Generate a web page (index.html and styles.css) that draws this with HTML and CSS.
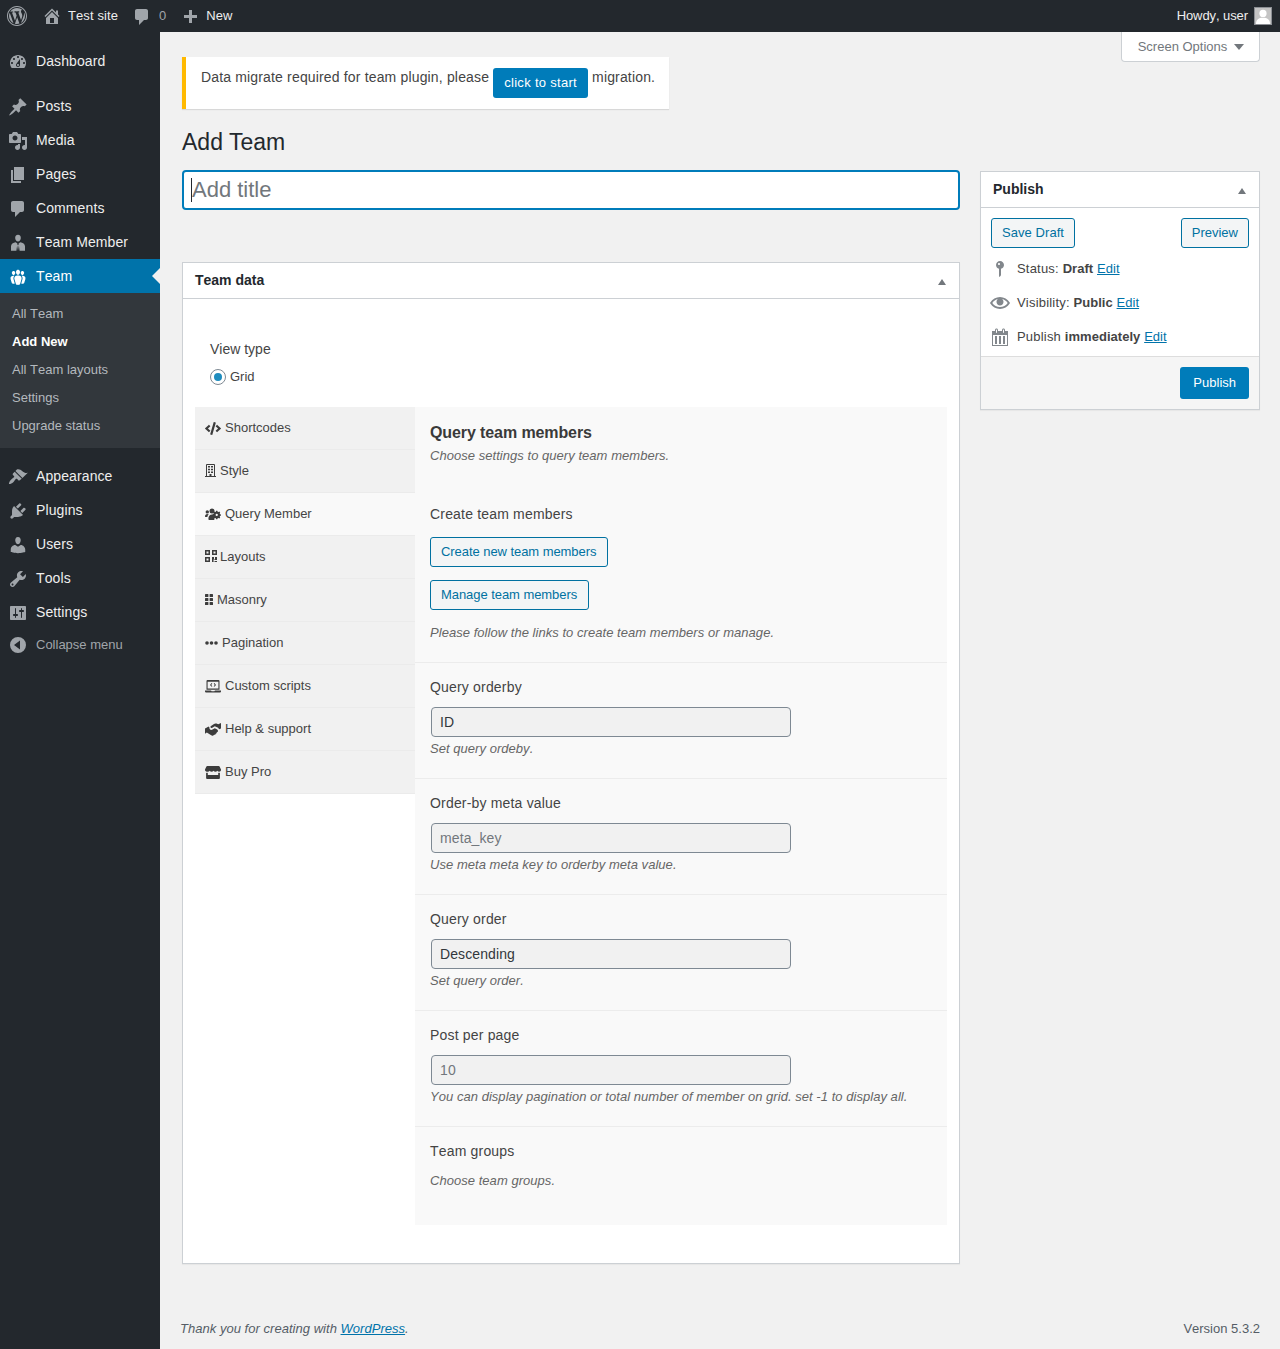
FILE: index.html
```html
<!DOCTYPE html>
<html lang="en">

<head>
    <meta charset="UTF-8">
    <meta name="viewport" content="width=device-width, initial-scale=1.0">
    <title>Add Team</title>
    <link rel="stylesheet" href="styles.css">
</head>

<body>
    <header class="adminbar">
        <svg class="bar-icon logo" viewBox="0 0 20 20"><path d="M20 10c0-5.52-4.48-10-10-10S0 4.48 0 10s4.48 10 10 10 10-4.48 10-10zM10 1.01c4.96 0 8.99 4.03 8.99 8.99s-4.03 8.99-8.99 8.99S1.01 14.96 1.01 10 5.04 1.01 10 1.01zM8.01 14.82L4.96 6.61c.49-.03 1.05-.08 1.05-.08.43-.05.38-1.01-.06-.99 0 0-1.29.1-2.13.1-.15 0-.33 0-.52-.01 1.44-2.17 3.9-3.6 6.7-3.6 2.09 0 3.99.79 5.41 2.09-.6-.08-1.45.35-1.45 1.42 0 .66.38 1.22.79 1.88.31.54.5 1.22.5 2.21 0 1.34-1.27 4.48-1.27 4.48l-2.71-7.5c.48-.03.75-.16.75-.16.43-.05.38-1.1-.05-1.08 0 0-1.3.11-2.14.11-.78 0-2.11-.11-2.11-.11-.43-.02-.48 1.06-.05 1.08l.84.08 1.12 3.04zm6.02 2.15L16.64 10s.67-1.69.39-3.81c.63 1.14.94 2.42.94 3.81 0 2.96-1.56 5.58-3.94 6.97zM2.68 6.77L6.5 17.25c-2.67-1.3-4.47-4.08-4.47-7.25 0-1.16.2-2.23.65-3.23zm7.45 4.53l2.29 6.25c-.75.27-1.57.42-2.42.42-.72 0-1.41-.11-2.06-.3z"/></svg>
        <svg class="bar-icon home" viewBox="0 0 20 20"><path d="M16 8.5l1.53 1.53-1.06 1.06L10 4.62l-6.47 6.47-1.06-1.06L10 2.5l4 4v-2h2v4zm-6-2.46l6 5.99V18H4v-5.97zM12 17v-5H8v5h4z"/></svg>
        <span class="bar-site">Test site</span>
        <svg class="bar-icon comment" viewBox="0 0 20 20"><path d="M5 2h9c1.1 0 2 .9 2 2v7c0 1.1-.9 2-2 2h-2l-5 5v-5H5c-1.1 0-2-.9-2-2V4c0-1.1.9-2 2-2z"/></svg>
        <span class="bar-count">0</span>
        <svg class="bar-icon plus" viewBox="0 0 20 20"><path d="M17 7v3h-5v5H9v-5H4V7h5V2h3v5h5z"/></svg>
        <span class="bar-new">New</span>
        <span class="bar-howdy">Howdy, user</span>
        <span class="avatar"><svg viewBox="0 0 16 16"><circle cx="8" cy="5.4" r="3.6"/><path d="M1 16c0-4.5 2.8-6.2 7-6.2s7 1.7 7 6.2z"/></svg></span>
    </header>

    <div class="layout">
        <nav class="sidemenu">
            <a class="menu-item first"><svg viewBox="0 0 20 20"><path d="M3.76 16h12.48c1.1-1.37 1.76-3.11 1.76-5 0-4.42-3.58-8-8-8s-8 3.58-8 8c0 1.89.66 3.63 1.76 5zM10 4c.55 0 1 .45 1 1s-.45 1-1 1-1-.45-1-1 .45-1 1-1zM6 6c.55 0 1 .45 1 1s-.45 1-1 1-1-.45-1-1 .45-1 1-1zm8 0c.55 0 1 .45 1 1s-.45 1-1 1-1-.45-1-1 .45-1 1-1zm-5.37 5.55L12 7v6c0 1.1-.9 2-2 2s-2-.9-2-2c0-.57.24-1.08.63-1.45zM4 10c.55 0 1 .45 1 1s-.45 1-1 1-1-.45-1-1 .45-1 1-1zm12 0c.55 0 1 .45 1 1s-.45 1-1 1-1-.45-1-1 .45-1 1-1zm-5 3c0-.55-.45-1-1-1s-1 .45-1 1 .45 1 1 1 1-.45 1-1z" fill-rule="evenodd"/></svg>Dashboard</a>
            <div class="menu-sep"></div>
            <a class="menu-item"><svg viewBox="0 0 20 20"><path d="M10.44 3.02l1.82-1.82 6.36 6.35-1.83 1.82c-1.05-.68-2.48-.57-3.41.36l-.75.75c-.92.93-1.04 2.35-.35 3.41l-1.83 1.82-2.41-2.41-2.8 2.79c-.42.42-3.38 2.71-3.8 2.29s1.86-3.39 2.28-3.81l2.79-2.79L4.1 9.36l1.83-1.82c1.05.69 2.48.57 3.4-.36l.75-.75c.93-.92 1.05-2.35.36-3.41z"/></svg>Posts</a>
            <a class="menu-item"><svg viewBox="0 0 20 20"><path d="M13 11V4c0-.55-.45-1-1-1h-1.67L9 1H5L3.67 3H2c-.55 0-1 .45-1 1v7c0 .55.45 1 1 1h10c.55 0 1-.45 1-1zM7 4.5c1.38 0 2.5 1.12 2.5 2.5S8.38 9.5 7 9.5 4.5 8.38 4.5 7 5.62 4.5 7 4.5zM14 6h5v10.5c0 1.38-1.12 2.5-2.5 2.5S14 17.88 14 16.5s1.12-2.5 2.5-2.5c.17 0 .34.02.5.05V9h-3V6zm-4 8.05V13h2v3.5c0 1.38-1.12 2.5-2.5 2.5S7 17.88 7 16.5 8.12 14 9.5 14c.17 0 .34.02.5.05z"/></svg>Media</a>
            <a class="menu-item"><svg viewBox="0 0 20 20"><path d="M6 15V2h10v13H6zm-1 1h8v2H3V5h2v11z"/></svg>Pages</a>
            <a class="menu-item"><svg viewBox="0 0 20 20"><path d="M5 2h9c1.1 0 2 .9 2 2v7c0 1.1-.9 2-2 2h-2l-5 5v-5H5c-1.1 0-2-.9-2-2V4c0-1.1.9-2 2-2z"/></svg>Comments</a>
            <a class="menu-item"><svg viewBox="0 0 20 20"><path d="M10 1.800c1.900 0 3 1.600 2.800 3.400-.2 1.700-1.200 3.300-2.800 3.300S7.400 6.900 7.200 5.200C7 3.400 8.100 1.800 10 1.800zM7.700 9.300l1.700 1.100-1 7.300H3v-4.500c0-2.200 2.200-3.500 4.700-3.900zm4.600 0c2.500.4 4.700 1.700 4.700 3.900v4.500h-5.400l-1-7.300zM10 11.200l.9 1.200-.9 5.300-.9-5.300z"/></svg>Team Member</a>
            <a class="menu-item current"><svg viewBox="0 0 20 20"><path d="M8.030 4.460c-.29 1.280.55 3.460 1.970 3.460 1.410 0 2.250-2.180 1.960-3.460-.22-.98-1.080-1.630-1.960-1.630-.89 0-1.740.65-1.970 1.630zm-4.130.9c-.25 1.080.47 2.930 1.670 2.930s1.920-1.850 1.670-2.930c-.19-.83-.92-1.390-1.670-1.390s-1.480.56-1.670 1.390zm8.860 0c-.25 1.080.47 2.930 1.660 2.930 1.200 0 1.920-1.850 1.670-2.930-.19-.83-.92-1.390-1.670-1.390-.74 0-1.470.56-1.660 1.390zm-.59 11.430l1.250-4.300C14.200 10 12.710 8.470 10 8.470c-2.720 0-4.210 1.530-3.440 4.020l1.260 4.300C8.050 17.510 9 18 10 18c.98 0 1.940-.49 2.170-1.210zm-6.100-7.630c-.49.67-.96 1.830-.42 3.590l1.120 3.790c-.34.2-.77.31-1.200.31-.85 0-1.650-.41-1.850-1.030l-1.070-3.650c-.65-2.110.61-3.400 2.920-3.400.27 0 .54.02.79.06-.1.1-.2.22-.29.33zm8.350-.39c2.310 0 3.580 1.290 2.920 3.400l-1.070 3.650c-.2.62-1 1.030-1.850 1.030-.43 0-.86-.11-1.200-.31l1.110-3.770c.55-1.780.08-2.940-.42-3.610-.08-.11-.18-.23-.28-.33.25-.04.51-.06.79-.06z"/></svg>Team</a>
            <div class="submenu">
                <a>All Team</a>
                <a class="on">Add New</a>
                <a>All Team layouts</a>
                <a>Settings</a>
                <a>Upgrade status</a>
            </div>
            <div class="menu-sep after-sub"></div>
            <a class="menu-item"><svg viewBox="0 0 20 20"><path d="M14.480 11.060L7.410 3.990l1.500-1.500c.5-.56 2.300-.47 3.510.32 1.210.8 1.430 1.280 2.910 2.100 1.180.64 2.450 1.260 4.450.85zm-.71.71L6.700 4.700 4.930 6.470c-.39.39-.39 1.020 0 1.410l1.060 1.060c.39.39.39 1.030 0 1.420-.6.6-1.430 1.110-2.210 1.690-.35.26-.7.53-1.010.84-1.200 1.200-2.100 3.600-1.800 4.100.4.500 3.100-.5 4.300-1.700.31-.31.58-.66.84-1.010.58-.78 1.090-1.610 1.690-2.210.39-.39 1.030-.39 1.420 0l1.060 1.060c.39.39 1.020.39 1.410 0z"/></svg>Appearance</a>
            <a class="menu-item"><svg viewBox="0 0 20 20"><path d="M13.110 4.360L9.870 7.600 8 5.730l3.240-3.240c.35-.34 1.050-.2 1.560.32.52.51.66 1.210.31 1.550zm-8 1.770l.91-1.120 9.010 9.010-1.190.84c-.71.71-2.630 1.160-3.820 1.160H6.140L4.900 17.260c-.59.59-1.540.59-2.120 0-.59-.58-.59-1.530 0-2.120l1.240-1.240v-3.880c0-1.130.4-3.190 1.090-3.890zm7.260 3.970l3.240-3.240c.34-.35 1.040-.21 1.550.31.52.51.66 1.210.31 1.550l-3.240 3.250z"/></svg>Plugins</a>
            <a class="menu-item"><svg viewBox="0 0 20 20"><path d="M10 9.250c-2.270 0-2.730-3.440-2.730-3.440C7 4.020 7.820 2 9.970 2c2.160 0 2.980 2.020 2.710 3.810 0 0-.41 3.440-2.680 3.440zm0 2.570L12.720 10c2.390 0 4.520 2.330 4.520 4.530v2.490s-3.650 1.130-7.240 1.130c-3.650 0-7.240-1.130-7.240-1.130v-2.490c0-2.250 1.940-4.480 4.470-4.480z"/></svg>Users</a>
            <a class="menu-item"><svg viewBox="0 0 20 20"><path d="M16.680 9.770c-1.340 1.340-3.300 1.670-4.950.99l-5.410 6.520c-.99.99-2.590.99-3.580 0s-.99-2.590 0-3.570l6.520-5.420c-.68-1.650-.35-3.610.99-4.950 1.280-1.280 3.120-1.620 4.720-1.060l-2.890 2.890 2.820 2.820 2.860-2.870c.53 1.580.18 3.390-1.080 4.650zM3.810 16.210c.4.39 1.040.39 1.430 0 .4-.4.4-1.040 0-1.430-.39-.4-1.030-.4-1.430 0-.39.39-.39 1.030 0 1.430z"/></svg>Tools</a>
            <a class="menu-item"><svg viewBox="0 0 20 20"><path d="M18 16V4c0-.55-.45-1-1-1H3c-.55 0-1 .45-1 1v12c0 .55.45 1 1 1h14c.55 0 1-.45 1-1zM8 11h1c.55 0 1 .45 1 1s-.45 1-1 1H8v1.500c0 .28-.22.5-.5.5s-.5-.22-.5-.5V13H6c-.55 0-1-.45-1-1s.45-1 1-1h1V5.500c0-.28.22-.5.5-.5s.5.22.5.5V11zm5-2h-1c-.55 0-1-.45-1-1s.45-1 1-1h1V5.500c0-.28.22-.5.5-.5s.5.22.5.5V7h1c.55 0 1 .45 1 1s-.45 1-1 1h-1v5.500c0 .28-.22.5-.5.5s-.5-.22-.5-.5V9z"/></svg>Settings</a>
            <a class="menu-collapse"><svg viewBox="0 0 20 20"><path d="M10 2a8 8 0 1 0 0 16 8 8 0 0 0 0-16zm2 3.500v9L6 10z" fill-rule="evenodd"/></svg>Collapse menu</a>
        </nav>

        <main class="content">
            <button class="screen-options">Screen Options<i class="tri-down"></i></button>

            <div class="notice">
                <p>Data migrate required for team plugin, please <a class="btn-primary small">click to start</a> migration.</p>
            </div>

            <h1>Add Team</h1>

            <div class="columns">
                <div class="col-main">
                    <div class="title-wrap">
                        <input class="title-input" type="text" placeholder="Add title">
                    </div>

                    <section class="postbox team-box">
                        <div class="postbox-head">
                            <h2>Team data</h2>
                            <i class="tri-up"></i>
                        </div>
                        <div class="team-body">
                            <div class="view-type">
                                <div class="view-label">View type</div>
                                <label class="radio-row"><span class="radio"></span>Grid</label>
                            </div>

                            <div class="tabs">
                                <ul class="tab-list">
                                    <li>
                                        <svg class="fa" viewBox="0 0 640 512"><path d="M278.900 511.500l-61-17.700c-6.400-1.800-10-8.500-8.200-14.900L346.200 8.700c1.800-6.400 8.500-10 14.900-8.200l61 17.700c6.400 1.800 10 8.500 8.200 14.900L293.800 503.300c-1.900 6.400-8.500 10.100-14.900 8.200zm-114-112.200l43.500-46.400c4.600-4.900 4.300-12.700-.8-17.200L117 256l90.600-79.700c5.100-4.500 5.500-12.300.8-17.200l-43.500-46.400c-4.500-4.800-12.100-5.100-17-.5L3.800 247.200c-5.100 4.700-5.100 12.800 0 17.500l144.100 135.100c4.900 4.600 12.500 4.400 17-.5zm327.200.6l144.100-135.100c5.100-4.700 5.100-12.800 0-17.500L492.100 112.100c-4.800-4.500-12.400-4.300-17 .5L431.600 159c-4.600 4.900-4.300 12.700.8 17.200L523 256l-90.600 79.700c-5.100 4.500-5.500 12.300-.8 17.200l43.500 46.400c4.500 4.900 12.100 5.100 17 .6z"/></svg>Shortcodes
                                    </li>
                                    <li>
                                        <svg class="fa w10" viewBox="0 0 11 13"><path d="M0 12h1V1q0-1 1-1h7q1 0 1 1v11h1v1H0zm2 0h2.500v-2h2v2H9V1H2zM3 2h2v1.500H3zm3 0h2v1.500H6zM3 4.700h2v1.500H3zm3 0h2v1.500H6zM3 7.400h2v1.500H3zm3 0h2v1.500H6z" fill-rule="evenodd"/></svg>Style
                                    </li>
                                    <li class="active">
                                        <svg class="fa" viewBox="0 0 16 12"><circle cx="2.300" cy="3.400" r="1.700"/><circle cx="7" cy="2.500" r="2.500"/><path d="M0 7.800c0-1.500.9-2.400 2.300-2.400.6 0 1.100.2 1.500.5-.9.7-1.300 1.400-1.400 2.700H.7C.3 8.600 0 8.400 0 7.800zM3.400 10.300c0-2.400 1.300-4.300 3.600-4.300 1 0 1.600.2 2.100.6-.3.9-.2 1.800.4 2.700-.4.900-.3 1.600 0 2.300H4.300c-.5 0-.9-.4-.9-1.300z"/><path d="M12.800 5.200l.3 1 .9.300.9-.5.9.9-.5.9.3.9 1 .3v1.200l-1 .3-.3.9.5.9-.9.9-.9-.5-.9.3-.3 1h-1.300l-.3-1-.9-.3-.9.5-.9-.9.5-.9-.3-.9-1-.3V8.900l1-.3.3-.9-.5-.9.9-.9.9.5.9-.3.3-1zm-.65 3.100a1.200 1.200 0 1 0 0 2.400 1.200 1.200 0 0 0 0-2.400z" fill-rule="evenodd" transform="translate(.2 -2.600) scale(.95)"/></svg>Query Member
                                    </li>
                                    <li>
                                        <svg class="fa w11" viewBox="0 0 12 12"><path d="M0 0h5v5H0zm1.500 1.500v2h2v-2zM7 0h5v5H7zm1.500 1.500v2h2v-2zM0 7h5v5H0zm1.500 1.500v2h2v-2zM7 7h2v2h1V7h2v3h-2v-.5H8.500V12H7zm3 4h2v1h-2zm-1.100 0H9.500v1H8.900z" fill-rule="evenodd"/></svg>Layouts
                                    </li>
                                    <li>
                                        <svg class="fa w8" viewBox="0 0 8 11"><rect width="3.400" height="3" rx=".5"/><rect x="4.600" width="3.400" height="3" rx=".5"/><rect y="4" width="3.400" height="3" rx=".5"/><rect x="4.600" y="4" width="3.400" height="3" rx=".5"/><rect y="8" width="3.400" height="3" rx=".5"/><rect x="4.600" y="8" width="3.400" height="3" rx=".5"/></svg>Masonry
                                    </li>
                                    <li>
                                        <svg class="fa w13" viewBox="0 0 13 4"><circle cx="2" cy="2" r="1.800"/><circle cx="6.500" cy="2" r="1.800"/><circle cx="11" cy="2" r="1.800"/></svg>Pagination
                                    </li>
                                    <li>
                                        <svg class="fa" viewBox="0 0 16 13"><path d="M2.500 0h11q1 0 1 1v8.800h-13V1q0-1 1-1zm.1 1.700v6.700h10.800V1.700zM0 10.500h6l.6.7h2.800l.6-.7h6v.9q0 1.100-1.100 1.100H1.100Q0 12.500 0 11.400z" fill-rule="evenodd"/><path d="M6.600 3L5 4.900l1.600 1.900.7-.6-1.100-1.300 1.100-1.300zm2.800 0l-.7.600 1.100 1.300-1.100 1.300.7.6L11 4.900z"/></svg>Custom scripts
                                    </li>
                                    <li>
                                        <svg class="fa" viewBox="0 0 16 13"><path d="M16 0v5.400l-1.900.9-1-1.600-3.300-1.400-2.500 1.500c-.7.400-1.400.2-1.700-.3-.4-.6-.1-1.200.4-1.500l3-1.900C9.600.4 10.600.2 11.500.600l1.700.7zM0 5.400l1.900-.9 1.600-.9 1 .9c-.2.500-.1 1.100.2 1.600.6.900 1.800 1.100 2.800.5l2.300-1.300 2.500 1.200.6 1c.3.500.1 1.100-.4 1.400l-.7.3v.4c0 .5-.3.900-.8 1l-.5.700c-.3.400-.8.600-1.300.5l-.9.700c-.7.400-1.500.3-2.100-.2L1.800 9.500 0 10.800z"/></svg>Help &amp; support
                                    </li>
                                    <li>
                                        <svg class="fa" viewBox="0 0 16 13"><path d="M2.300 0h11.400q.6 0 .9.5L16 3.600c.2 1.200-.6 2.200-1.800 2.200-.8 0-1.500-.4-1.900-1-.4.6-1.100 1-1.900 1s-1.500-.4-1.900-1c-.4.6-1.100 1-1.900 1s-1.500-.4-1.900-1c-.4.6-1.100 1-1.900 1C.6 5.800-.2 4.800 0 3.600L1.400.5q.3-.5.900-.5zM1.100 6.800c.6.2 1.200.2 1.700 0V9h10.400V6.800c.5.200 1.100.2 1.700 0V12q0 1-1 1H2.100q-1 0-1-1z"/></svg>Buy Pro
                                    </li>
                                </ul>

                                <div class="tab-panel">
                                    <div class="panel-head">
                                        <h3>Query team members</h3>
                                        <p class="desc">Choose settings to query team members.</p>
                                    </div>

                                    <div class="field field-links">
                                        <div class="field-label">Create team members</div>
                                        <a class="btn-outline stacked">Create new team members</a>
                                        <a class="btn-outline stacked">Manage team members</a>
                                        <p class="desc">Please follow the links to create team members or manage.</p>
                                    </div>

                                    <div class="field">
                                        <div class="field-label">Query orderby</div>
                                        <div class="select-box">ID</div>
                                        <p class="desc">Set query ordeby.</p>
                                    </div>

                                    <div class="field">
                                        <div class="field-label">Order-by meta value</div>
                                        <input class="text-box" type="text" placeholder="meta_key">
                                        <p class="desc">Use meta meta key to orderby meta value.</p>
                                    </div>

                                    <div class="field">
                                        <div class="field-label">Query order</div>
                                        <div class="select-box">Descending</div>
                                        <p class="desc">Set query order.</p>
                                    </div>

                                    <div class="field">
                                        <div class="field-label">Post per page</div>
                                        <input class="text-box" type="text" placeholder="10">
                                        <p class="desc">You can display pagination or total number of member on grid. set -1 to display all.</p>
                                    </div>

                                    <div class="field last">
                                        <div class="field-label">Team groups</div>
                                        <p class="desc groups">Choose team groups.</p>
                                    </div>
                                </div>
                            </div>
                        </div>
                    </section>
                </div>

                <aside class="col-side">
                    <section class="postbox publish-box">
                        <div class="postbox-head">
                            <h2>Publish</h2>
                            <i class="tri-up"></i>
                        </div>
                        <div class="publish-actions">
                            <a class="btn-outline">Save Draft</a>
                            <a class="btn-outline preview">Preview</a>
                        </div>
                        <div class="pub-row">
                            <svg viewBox="0 0 20 20"><path d="M14 6c0 1.860-1.280 3.410-3 3.860V16c0 1-2 2-2 2V9.860c-1.720-.45-3-2-3-3.860 0-2.210 1.790-4 4-4s4 1.790 4 4zM8 5c0 .55.45 1 1 1s1-.45 1-1-.45-1-1-1-1 .45-1 1z" fill-rule="evenodd"/></svg>
                            <span>Status: <b>Draft</b> <a>Edit</a></span>
                        </div>
                        <div class="pub-row">
                            <svg viewBox="0 0 20 20"><path d="M19.700 9.400C17.700 6 14 3.900 10 3.900S2.300 6 .3 9.400L0 10l.3.6c2 3.400 5.700 5.500 9.700 5.500s7.700-2.100 9.700-5.500l.3-.6-.3-.6zM10 14.100c-3.100 0-6-1.600-7.700-4.100C3.600 8 5.700 6.600 8 6.100c-.9.6-1.500 1.700-1.500 2.900 0 1.900 1.600 3.500 3.500 3.500s3.500-1.600 3.500-3.500c0-1.200-.6-2.300-1.500-2.900 2.300.5 4.400 1.900 5.700 3.900-1.700 2.500-4.600 4.100-7.700 4.100z"/></svg>
                            <span>Visibility: <b>Public</b> <a>Edit</a></span>
                        </div>
                        <div class="pub-row">
                            <svg viewBox="0 0 20 20"><path d="M15 4h3v15H2V4h3V3c0-.41.15-.76.44-1.060.29-.29.65-.44 1.060-.44s.77.15 1.060.44c.29.3.44.65.44 1.060v1h4V3c0-.41.15-.76.44-1.060.29-.29.65-.44 1.060-.44s.77.15 1.060.44c.29.3.44.65.44 1.060v1zM6 3v2.500c0 .14.05.26.15.36.09.09.21.14.35.14s.26-.05.35-.14c.1-.1.15-.22.15-.36V3c0-.14-.05-.26-.15-.35-.09-.1-.21-.15-.35-.15s-.26.05-.35.15c-.1.09-.15.21-.15.35zm7 0v2.500c0 .14.05.26.14.36.1.09.22.14.36.14s.26-.05.36-.14c.09-.1.14-.22.14-.36V3c0-.14-.05-.26-.14-.35-.1-.1-.22-.15-.36-.15s-.26.05-.36.15c-.09.09-.14.21-.14.35zm4 15V8H3v10h14zM5 9h2v8H5zm4 0h2v8H9zm4 0h2v8h-2z"/></svg>
                            <span>Publish <b>immediately</b> <a>Edit</a></span>
                        </div>
                        <div class="publish-foot">
                            <a class="btn-primary">Publish</a>
                        </div>
                    </section>
                </aside>
            </div>

            <footer class="page-foot">
                <span class="thanks">Thank you for creating with <a>WordPress</a>.</span>
                <span>Version 5.3.2</span>
            </footer>
        </main>
    </div>
</body>

</html>
```

FILE: styles.css
```css
* {
    box-sizing: border-box;
}

html,
body {
    margin: 0;
    padding: 0;
}

body {
    font-family: "Liberation Sans", Arial, sans-serif;
    font-size: 13px;
    line-height: 1.4;
    color: #444;
    background-color: #f1f1f1;
    height: 1349px;
    overflow: hidden;
    text-rendering: optimizeSpeed;
    font-kerning: none;
}

/* top bar */
.adminbar {
    display: flex;
    align-items: center;
    height: 32px;
    background-color: #23282d;
    color: #eee;
    font-size: 13px;
}

.bar-icon {
    width: 20px;
    height: 20px;
    fill: #a0a5aa;
    flex: none;
}

.logo {
    margin-left: 7px;
}

.home {
    margin-left: 15px;
}

.bar-site {
    margin-left: 6px;
    letter-spacing: 0.1px;
}

.comment {
    margin: 2px 0 0 14px;
}

.bar-count {
    margin-left: 7px;
    color: #a0a5aa;
}

.plus {
    margin: 4px 0 0 14px;
}

.bar-new {
    margin-left: 6px;
}

.bar-howdy {
    margin-left: auto;
    letter-spacing: -0.08px;
}

.avatar {
    width: 18px;
    height: 18px;
    margin: 0 8px 0 6px;
    border: 1px solid #8c8f94;
    background-color: #c4c4c4;
    overflow: hidden;
}

.avatar svg {
    display: block;
    width: 16px;
    height: 16px;
    fill: #fff;
}

.layout {
    display: flex;
    height: 1317px;
}

/* left menu */
.sidemenu {
    width: 160px;
    flex: none;
    background-color: #23282d;
    padding-top: 12px;
}

.menu-item {
    display: flex;
    align-items: center;
    height: 34px;
    padding: 1px 0 0 8px;
    font-size: 14px;
    letter-spacing: 0.1px;
    color: #eee;
    position: relative;
}

.menu-item svg {
    width: 20px;
    height: 20px;
    margin-right: 8px;
    fill: #a0a5aa;
    flex: none;
}

.menu-sep {
    height: 11px;
}

.menu-item.current {
    background-color: #0073aa;
    color: #fff;
}

.menu-item.current svg {
    fill: #fff;
}

.menu-item.current::after {
    content: "";
    position: absolute;
    right: 0;
    top: 9px;
    border: 8px solid transparent;
    border-right-color: #f1f1f1;
    border-left-width: 0;
}

.submenu {
    background-color: #32373c;
    padding: 7px 0 8px;
}

.submenu a {
    display: flex;
    align-items: center;
    height: 28px;
    padding-left: 12px;
    color: #b4b9be;
    font-size: 13px;
}

.submenu a.on {
    color: #fff;
    font-weight: 700;
}

.menu-collapse {
    display: flex;
    align-items: center;
    height: 32px;
    padding-left: 8px;
    color: #a0a5aa;
    font-size: 13px;
}

.menu-collapse svg {
    width: 20px;
    height: 20px;
    margin-right: 8px;
    fill: #a0a5aa;
}

/* page content */
.content {
    flex: 1;
    padding: 0 20px 0 22px;
    min-width: 0;
}

.screen-options {
    float: right;
    width: 139px;
    height: 30px;
    padding: 0 0 0 1px;
    background-color: #fff;
    border: 1px solid #ccd0d4;
    border-top: none;
    border-radius: 0 0 4px 4px;
    color: #72777c;
    font: inherit;
    line-height: 30px;
}

.tri-down {
    display: inline-block;
    margin-left: 7px;
    border: 5px solid transparent;
    border-top: 6px solid #72777c;
    border-bottom: none;
    vertical-align: 1px;
}

.notice {
    display: inline-block;
    margin-top: 25px;
    width: 487px;
    height: 52px;
    padding: 0 12px 0 15px;
    background-color: #fff;
    border-left: 4px solid #ffb900;
    box-shadow: 0 1px 1px rgba(0, 0, 0, 0.1);
}

.notice p {
    margin: 0;
    padding-top: 10px;
    line-height: 20px;
    font-size: 14px;
    letter-spacing: 0.16px;
    white-space: nowrap;
}

.btn-primary {
    display: inline-block;
    background-color: #007cba;
    color: #fff;
    border-radius: 3px;
    padding: 0 13px;
    height: 32px;
    line-height: 32px;
    font-size: 13px;
}

.btn-primary.small {
    height: 30px;
    line-height: 30px;
    padding: 0 11px;
    vertical-align: -5px;
    letter-spacing: 0.3px;
}

h1 {
    margin: 19px 0 0;
    font-size: 23px;
    font-weight: 400;
    line-height: 29px;
    color: #23282d;
    font-kerning: normal;
}

.columns {
    display: flex;
    gap: 20px;
    margin-top: 13px;
}

.col-main {
    width: 778px;
    flex: none;
}

.col-side {
    width: 280px;
    flex: none;
}

.title-wrap {
    position: relative;
}

/* text caret in the focused title */
.title-wrap::after {
    content: "";
    position: absolute;
    left: 9px;
    top: 8px;
    width: 1px;
    height: 24px;
    background-color: #23282d;
}

.title-input {
    display: block;
    width: 100%;
    height: 40px;
    padding: 0 8px;
    border: 2px solid #007cba;
    border-radius: 4px;
    background-color: #fff;
    font-family: inherit;
    font-size: 22px;
    outline: none;
}

.title-input::placeholder {
    color: #72777c;
    opacity: 1;
}

.postbox {
    background-color: #fff;
    border: 1px solid #ccd0d4;
    box-shadow: 0 1px 1px rgba(0, 0, 0, 0.04);
}

.postbox-head {
    display: flex;
    align-items: center;
    justify-content: space-between;
    height: 36px;
    padding: 0 12px;
    border-bottom: 1px solid #ccd0d4;
}

.postbox-head h2 {
    margin: 0;
    font-size: 14px;
    font-weight: 700;
    color: #23282d;
}

.tri-up {
    border: 4px solid transparent;
    border-bottom: 6px solid #72777c;
    border-top: none;
    margin: 2px 1px 0 0;
}

.team-box {
    margin-top: 52px;
    height: 1002px;
}

.team-body {
    padding: 0 12px;
}

.view-type {
    height: 108px;
    padding: 35px 0 0 15px;
}

.view-label {
    line-height: 30px;
    height: 30px;
    font-size: 14px;
}

.radio-row {
    display: flex;
    align-items: center;
    height: 26px;
}

.radio {
    width: 16px;
    height: 16px;
    margin-right: 4px;
    border: 1px solid #7e8993;
    border-radius: 50%;
    background-color: #fff;
    display: flex;
    align-items: center;
    justify-content: center;
    margin-left: 0;
}

.radio::before {
    content: "";
    width: 8px;
    height: 8px;
    border-radius: 50%;
    background-color: #1e8cbe;
}

.tabs {
    display: flex;
    align-items: flex-start;
}

.tab-list {
    list-style: none;
    margin: 0;
    padding: 0;
    width: 220px;
    flex: none;
    background-color: #f1f1f1;
}

.tab-list li {
    display: flex;
    align-items: center;
    height: 43px;
    padding-left: 10px;
    background-color: #f1f1f1;
    border-bottom: 1px solid #ebebeb;
}

.tab-list li.active {
    background-color: #f9f9f9;
}

.fa {
    width: 16px;
    height: 13px;
    margin-right: 4px;
    fill: #3c3c3c;
    flex: none;
}

.fa.w10 {
    width: 11px;
    margin-bottom: 1px;
}

.fa.w11 {
    width: 12px;
    height: 12px;
    margin: 0 3px 2px 0;
}

.fa.w8 {
    width: 8px;
    height: 11px;
    margin-bottom: 1px;
}

.fa.w13 {
    width: 13px;
    height: 4px;
}

.tab-panel {
    flex: 1;
    height: 818px;
    background-color: #f9f9f9;
}

.panel-head {
    height: 80px;
    padding: 15px 15px 0;
}

.panel-head h3 {
    margin: 0;
    font-size: 16px;
    line-height: 21px;
    letter-spacing: -0.1px;
    color: #3a3a3a;
}

.desc {
    margin: 0;
    font-size: 13px;
    font-style: italic;
    color: #666;
    line-height: 18px;
    letter-spacing: 0.04px;
}

.panel-head .desc {
    margin-top: 4px;
}

.field {
    height: 116px;
    padding: 14px 15px 0;
    border-bottom: 1px solid #ececec;
}

.field-links {
    height: 176px;
    padding-top: 17px;
}

.field.last {
    border-bottom: none;
    height: 99px;
}

.field-label {
    font-size: 14px;
    line-height: 20px;
    height: 20px;
    letter-spacing: 0.18px;
    color: #444;
}

.btn-outline {
    display: inline-block;
    height: 30px;
    line-height: 28px;
    padding: 0 10px;
    border: 1px solid #0071a1;
    border-radius: 3px;
    background-color: #f3f5f6;
    color: #0071a1;
    letter-spacing: 0.06px;
}

.btn-outline.preview {
    letter-spacing: 0;
}

.btn-outline.stacked {
    display: table;
    margin-top: 13px;
    padding-right: 11px;
    letter-spacing: -0.06px;
}

.field-links .desc {
    margin-top: 14px;
}

.select-box,
.text-box {
    display: block;
    width: 360px;
    height: 30px;
    margin: 10px 0 0 1px;
    padding: 0 8px;
    border: 1px solid #7e8993;
    border-radius: 4px;
    background-color: #f1f1f1;
    font-family: inherit;
    font-size: 14px;
    line-height: 28px;
    letter-spacing: 0.1px;
    color: #32373c;
}

.text-box {
    outline: none;
}

.text-box::placeholder {
    color: #72777c;
    opacity: 1;
}

.field .select-box+.desc,
.field .text-box+.desc {
    margin-top: 3px;
}

.desc.groups {
    margin-top: 11px;
}

/* publish box */
.publish-box {
    margin-top: 1px;
    height: 239px;
}

.publish-actions {
    display: flex;
    justify-content: space-between;
    padding: 10px 10px 4px;
}

.pub-row {
    display: flex;
    align-items: center;
    height: 34px;
    padding-left: 9px;
    letter-spacing: 0.2px;
}

.pub-row svg {
    width: 20px;
    height: 20px;
    margin-right: 7px;
    fill: #82878c;
    flex: none;
}

.pub-row b,
.pub-row a {
    letter-spacing: 0.03px;
}

.pub-row a {
    color: #0073aa;
    text-decoration: underline;
}

.publish-foot {
    display: flex;
    justify-content: flex-end;
    height: 53px;
    margin-top: 2px;
    padding: 10px 10px 0;
    background-color: #f5f5f5;
    border-top: 1px solid #ddd;
}

.page-foot {
    display: flex;
    justify-content: space-between;
    margin: 56px 0 0 -2px;
    color: #555d66;
}

.thanks {
    font-style: italic;
    letter-spacing: 0.03px;
}

.thanks a {
    color: #0073aa;
    text-decoration: underline;
}
```
